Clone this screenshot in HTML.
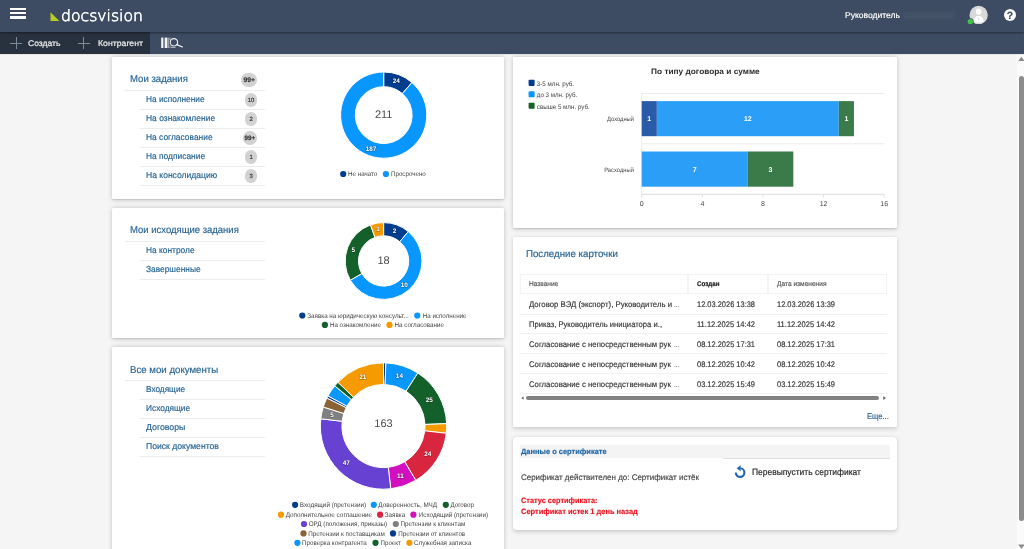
<!DOCTYPE html>
<html lang="ru"><head><meta charset="utf-8"><title>Docsvision</title>
<style>
html,body{margin:0;padding:0}
#root{position:absolute;left:0;top:0;width:1024px;height:549px;overflow:hidden;will-change:transform}
body{width:1024px;height:549px;overflow:hidden;background:#f5f5f5;font-family:"Liberation Sans",Arial,sans-serif;position:relative}
.abs{position:absolute}
.t{position:absolute;white-space:nowrap;line-height:20px;height:20px;text-rendering:geometricPrecision;-webkit-text-stroke:0.16px currentColor}
#top{position:absolute;left:0;top:0;width:1024px;height:32px;background:#3d4c62;box-shadow:0 0.7px 2px rgba(0,0,0,.42);z-index:2}
#tb{position:absolute;left:0;top:32px;width:1024px;height:21.7px;background:#3d4c62;box-shadow:0 0.4px 1.2px rgba(0,0,0,.3);z-index:1}
#tbd{position:absolute;left:0;top:0;width:150.3px;height:21.9px;background:#28323f}
.hb{position:absolute;left:10px;width:16.2px;height:2.2px;background:#fff;z-index:3}
#help{position:absolute;left:1003.9px;top:8.8px;width:12px;height:12px;border-radius:50%;background:#fff;z-index:3}
.card{position:absolute;background:#fff;border-radius:1.2px;box-shadow:0 0.5px 5px rgba(0,0,0,.2),0 0.8px 1.2px rgba(0,0,0,.1)}
.cb{box-shadow:0 1.7px 4px rgba(0,0,0,.17),0 0 1.2px rgba(0,0,0,.1)}
.hl{position:absolute;height:1px}
.bd{position:absolute;background:#d2d2d2}
.th{position:absolute;box-sizing:border-box;border:1px solid #f3f3f3;background:#fff}
#sbt{position:absolute;left:1016.8px;top:54px;width:7.2px;height:495px;background:#fafafa}
#sbth{position:absolute;left:1018.9px;top:76.4px;width:5.6px;height:444.2px;border-radius:2.8px;background:#8c8c8c}
#ch{position:absolute;left:0;top:0;font-family:"Liberation Sans",Arial,sans-serif;text-rendering:geometricPrecision}
#ch .sl{fill:#fff;font-weight:700;text-anchor:middle;paint-order:stroke;stroke:rgba(0,0,0,.35);stroke-width:1px;stroke-linejoin:round}
svg.abs,.t,.z{z-index:3}
</style></head>
<body>
<div id="root">
<div id="top"></div>
<div id="tb"><div id="tbd"></div></div>
<div class="hb" style="top:7.9px"></div>
<div class="hb" style="top:12.1px"></div>
<div class="hb" style="top:16.4px"></div>
<svg class="abs" style="left:50px;top:11px" width="11" height="11" viewBox="0 0 11 11"><path d="M0.5,1.2L9.4,9.9L0.5,9.9Z" fill="#b7cc23"/></svg>
<div class="t" style="top:6px;font-size:15.4px;color:#fff;font-weight:200;left:60.90px;transform-origin:0 50%;transform:scaleX(1.0184);font-family:'DejaVu Sans','Liberation Sans',sans-serif;-webkit-text-stroke:0.62px #fff;"><span>docsvision</span></div>
<div class="t" style="top:5px;font-size:8.4px;color:#fff;left:844.50px;transform-origin:0 50%;transform:scaleX(1.0191);"><span>Руководитель</span></div>
<div class="abs z" style="left:903px;top:11.5px;width:52px;height:7.5px;background:rgba(255,255,255,.035);filter:blur(1.2px)"></div>
<svg class="abs" style="left:966px;top:4px" width="24" height="24" viewBox="0 0 24 24">
<defs><clipPath id="avc"><circle cx="12.65" cy="10.95" r="9.15"/></clipPath></defs>
<circle cx="12.65" cy="10.95" r="9.15" fill="#d9d9d9"/>
<g clip-path="url(#avc)" fill="#fff"><ellipse cx="12.6" cy="7.6" rx="2.7" ry="3.2"/><path d="M7.6,18.5C7.6,13.8 9.3,12 12.6,12C15.9,12 17.6,13.8 17.6,18.5Z"/></g>
<path d="M12.6,12.2L12,15.8L12.6,16.6L13.2,15.8Z" fill="#d9d9d9"/>
<circle cx="4.3" cy="17.6" r="3.3" fill="#3d4c62"/><circle cx="4.3" cy="17.6" r="2.7" fill="#41c241"/>
</svg>
<div id="help"></div>
<div class="t" style="top:6px;font-size:10.5px;color:#3d4c62;font-weight:700;left:809.90px;width:400px;text-align:center;transform-origin:50% 50%;"><span>?</span></div>
<div class="abs z" style="left:10.10px;top:42.60px;width:12px;height:1px;background:#7f8a98"></div><div class="abs z" style="left:15.60px;top:37.10px;width:1px;height:12px;background:#7f8a98"></div>
<div class="t" style="top:34px;font-size:8.2px;color:#f4f4f4;left:27.60px;transform-origin:0 50%;transform:scaleX(1.0410);"><span>Создать</span></div>
<div class="abs z" style="left:77.75px;top:42.80px;width:12px;height:1px;background:#7f8a98"></div><div class="abs z" style="left:83.25px;top:37.30px;width:1px;height:12px;background:#7f8a98"></div>
<div class="t" style="top:34px;font-size:8.2px;color:#f4f4f4;left:98.00px;transform-origin:0 50%;transform:scaleX(1.0627);"><span>Контрагент</span></div>
<svg class="abs" style="left:160px;top:36px" width="26" height="14" viewBox="0 0 26 14">
<g fill="#f4f4f4"><rect x="1.2" y="1.6" width="1.9" height="10.4"/><rect x="3.6" y="1.6" width="0.7" height="10.4" opacity=".8"/><rect x="4.9" y="1.6" width="2.2" height="10.4"/><rect x="7.6" y="1.6" width="0.9" height="10.4"/>
<rect x="9.6" y="1.6" width="0.8" height="2.6" opacity=".8"/><rect x="9.6" y="9.4" width="0.8" height="2.6" opacity=".8"/><rect x="11" y="11" width="4.5" height="1" opacity=".6"/></g>
<circle cx="13.9" cy="6.3" r="3.7" fill="none" stroke="#f4f4f4" stroke-width="1.1"/>
<path d="M16.8,8.6L22.4,11" stroke="#f4f4f4" stroke-width="1.2" stroke-linecap="round"/>
</svg>
<div id="sbt"></div><div id="sbth"></div>
<svg class="abs" style="left:1016px;top:54px" width="8" height="10" viewBox="0 0 8 10"><path d="M2.2,7L5.4,2.8L8.6,7Z" fill="#8a8a8a"/></svg>
<svg class="abs" style="left:1016px;top:540.6px" width="8" height="9" viewBox="0 0 8 9"><path d="M2.2,3.6L8.6,3.6L5.4,7.8Z" fill="#8a8a8a"/></svg>
<div class="card" style="left:112px;top:57px;width:392px;height:141.5px;"></div>
<div class="t" style="top:70px;font-size:10.0px;color:#256394;left:129.60px;transform-origin:0 50%;transform:scaleX(0.9580);"><span>Мои задания</span></div>
<div class="bd" style="left:241.40px;top:72.80px;width:15.7px;height:14.4px;border-radius:7.2px"></div><div class="t" style="top:71px;font-size:6.8px;color:#333;font-weight:700;left:49.25px;width:400px;text-align:center;transform-origin:50% 50%;"><span>99+</span></div>
<div class="hl" style="left:124.5px;top:90.00px;width:140.30px;background:#ececec"></div>
<div class="t" style="top:89px;font-size:8.7px;color:#256394;left:145.70px;transform-origin:0 50%;transform:scaleX(0.9567);"><span>На исполнение</span></div>
<div class="bd" style="left:245.10px;top:93.30px;width:12px;height:13.6px;border-radius:6.8px"></div><div class="t" style="top:91px;font-size:6.0px;color:#333;left:51.10px;width:400px;text-align:center;transform-origin:50% 50%;"><span>10</span></div>
<div class="hl" style="left:140px;top:109.00px;width:124.80px;background:#ececec"></div>
<div class="t" style="top:108px;font-size:8.7px;color:#256394;left:145.70px;transform-origin:0 50%;transform:scaleX(0.9739);"><span>На ознакомление</span></div>
<div class="bd" style="left:245.10px;top:112.30px;width:12px;height:13.6px;border-radius:6.8px"></div><div class="t" style="top:110px;font-size:6.0px;color:#333;left:51.10px;width:400px;text-align:center;transform-origin:50% 50%;"><span>2</span></div>
<div class="hl" style="left:140px;top:128.00px;width:124.80px;background:#ececec"></div>
<div class="t" style="top:127px;font-size:8.7px;color:#256394;left:145.70px;transform-origin:0 50%;transform:scaleX(0.9683);"><span>На согласование</span></div>
<div class="bd" style="left:242.50px;top:131.30px;width:14.6px;height:13.6px;border-radius:6.8px"></div><div class="t" style="top:129px;font-size:6.3px;color:#333;font-weight:700;left:49.80px;width:400px;text-align:center;transform-origin:50% 50%;"><span>99+</span></div>
<div class="hl" style="left:140px;top:147.00px;width:124.80px;background:#ececec"></div>
<div class="t" style="top:146px;font-size:8.7px;color:#256394;left:145.70px;transform-origin:0 50%;transform:scaleX(0.9664);"><span>На подписание</span></div>
<div class="bd" style="left:245.10px;top:150.30px;width:12px;height:13.6px;border-radius:6.8px"></div><div class="t" style="top:148px;font-size:6.0px;color:#333;left:51.10px;width:400px;text-align:center;transform-origin:50% 50%;"><span>1</span></div>
<div class="hl" style="left:140px;top:166.00px;width:124.80px;background:#ececec"></div>
<div class="t" style="top:165px;font-size:8.7px;color:#256394;left:145.70px;transform-origin:0 50%;transform:scaleX(0.9834);"><span>На консолидацию</span></div>
<div class="bd" style="left:245.10px;top:169.30px;width:12px;height:13.6px;border-radius:6.8px"></div><div class="t" style="top:167px;font-size:6.0px;color:#333;left:51.10px;width:400px;text-align:center;transform-origin:50% 50%;"><span>3</span></div>
<div class="hl" style="left:140px;top:185.00px;width:124.80px;background:#ececec"></div>
<div class="card" style="left:112px;top:207.6px;width:392px;height:130.4px;"></div>
<div class="t" style="top:221px;font-size:10.0px;color:#256394;left:129.60px;transform-origin:0 50%;transform:scaleX(0.9489);"><span>Мои исходящие задания</span></div>
<div class="hl" style="left:124.5px;top:241.00px;width:140.30px;background:#ececec"></div>
<div class="t" style="top:240px;font-size:8.7px;color:#256394;left:145.70px;transform-origin:0 50%;transform:scaleX(0.9642);"><span>На контроле</span></div>
<div class="hl" style="left:140px;top:260.00px;width:124.80px;background:#ececec"></div>
<div class="t" style="top:259px;font-size:8.7px;color:#256394;left:145.70px;transform-origin:0 50%;transform:scaleX(0.9624);"><span>Завершенные</span></div>
<div class="hl" style="left:140px;top:279.00px;width:124.80px;background:#ececec"></div>
<div class="card" style="left:112px;top:347.3px;width:392px;height:230px;"></div>
<div class="t" style="top:361px;font-size:10.0px;color:#256394;left:129.50px;transform-origin:0 50%;transform:scaleX(0.9659);"><span>Все мои документы</span></div>
<div class="hl" style="left:124.5px;top:379.80px;width:140.30px;background:#ececec"></div>
<div class="t" style="top:379px;font-size:8.7px;color:#256394;left:145.70px;transform-origin:0 50%;transform:scaleX(0.9490);"><span>Входящие</span></div>
<div class="hl" style="left:140px;top:398.80px;width:124.80px;background:#ececec"></div>
<div class="t" style="top:398px;font-size:8.7px;color:#256394;left:145.70px;transform-origin:0 50%;transform:scaleX(0.9567);"><span>Исходящие</span></div>
<div class="hl" style="left:140px;top:417.80px;width:124.80px;background:#ececec"></div>
<div class="t" style="top:417px;font-size:8.7px;color:#256394;left:145.70px;transform-origin:0 50%;transform:scaleX(1.0090);"><span>Договоры</span></div>
<div class="hl" style="left:140px;top:436.80px;width:124.80px;background:#ececec"></div>
<div class="t" style="top:436px;font-size:8.7px;color:#256394;left:145.70px;transform-origin:0 50%;transform:scaleX(0.9923);"><span>Поиск документов</span></div>
<div class="hl" style="left:140px;top:455.80px;width:124.80px;background:#ececec"></div>
<div class="card" style="left:513px;top:57px;width:384px;height:170.6px;"></div>
<div class="card cb" style="left:513px;top:236.8px;width:384px;height:190.6px;"></div>
<div class="card cb" style="left:513px;top:436.7px;width:384px;height:93.1px;border-radius:4px;"></div>
<div class="t" style="top:245px;font-size:9.9px;color:#256394;left:526.00px;transform-origin:0 50%;transform:scaleX(0.9817);"><span>Последние карточки</span></div>
<div class="th" style="left:520.3px;top:274px;width:167.3px;height:20px"></div>
<div class="th" style="left:688.2px;top:274px;width:79.6px;height:20px"></div>
<div class="th" style="left:768.4px;top:274px;width:118.8px;height:20px"></div>
<div class="t" style="top:275px;font-size:6.8px;color:#555;left:528.70px;transform-origin:0 50%;transform:scaleX(0.9613);"><span>Название</span></div>
<div class="t" style="top:275px;font-size:6.8px;color:#111;font-weight:700;left:697.20px;transform-origin:0 50%;transform:scaleX(0.9160);"><span>Создан</span></div>
<div class="t" style="top:275px;font-size:6.8px;color:#555;left:777.10px;transform-origin:0 50%;transform:scaleX(0.9691);"><span>Дата изменения</span></div>
<div class="t" style="top:295px;font-size:8.1px;color:#333;left:528.60px;transform-origin:0 50%;transform:scaleX(0.9596);"><span>Договор ВЭД (экспорт), Руководитель и</span></div>
<div class="t" style="top:296px;font-size:7.0px;color:#666;left:673.50px;transform-origin:0 50%;transform:scaleX(0.9583);"><span>...</span></div>
<div class="t" style="top:295px;font-size:8.1px;color:#333;left:697.20px;transform-origin:0 50%;transform:scaleX(0.9204);"><span>12.03.2026 13:38</span></div>
<div class="t" style="top:295px;font-size:8.1px;color:#333;left:777.10px;transform-origin:0 50%;transform:scaleX(0.9204);"><span>12.03.2026 13:39</span></div>
<div class="hl" style="left:520.3px;top:313.50px;width:366.90px;background:#f0f0f0"></div>
<div class="t" style="top:315px;font-size:8.1px;color:#333;left:528.60px;transform-origin:0 50%;transform:scaleX(0.9436);"><span>Приказ, Руководитель инициатора и.,</span></div>
<div class="t" style="top:315px;font-size:8.1px;color:#333;left:697.20px;transform-origin:0 50%;transform:scaleX(0.9292);"><span>11.12.2025 14:42</span></div>
<div class="t" style="top:315px;font-size:8.1px;color:#333;left:777.10px;transform-origin:0 50%;transform:scaleX(0.9292);"><span>11.12.2025 14:42</span></div>
<div class="hl" style="left:520.3px;top:333.35px;width:366.90px;background:#f0f0f0"></div>
<div class="t" style="top:335px;font-size:8.1px;color:#333;left:528.60px;transform-origin:0 50%;transform:scaleX(0.9567);"><span>Согласование с непосредственным рук</span></div>
<div class="t" style="top:336px;font-size:7.0px;color:#666;left:673.50px;transform-origin:0 50%;transform:scaleX(0.9583);"><span>...</span></div>
<div class="t" style="top:335px;font-size:8.1px;color:#333;left:697.20px;transform-origin:0 50%;transform:scaleX(0.9204);"><span>08.12.2025 17:31</span></div>
<div class="t" style="top:335px;font-size:8.1px;color:#333;left:777.10px;transform-origin:0 50%;transform:scaleX(0.9204);"><span>08.12.2025 17:31</span></div>
<div class="hl" style="left:520.3px;top:353.20px;width:366.90px;background:#f0f0f0"></div>
<div class="t" style="top:355px;font-size:8.1px;color:#333;left:528.60px;transform-origin:0 50%;transform:scaleX(0.9567);"><span>Согласование с непосредственным рук</span></div>
<div class="t" style="top:356px;font-size:7.0px;color:#666;left:673.50px;transform-origin:0 50%;transform:scaleX(0.9583);"><span>...</span></div>
<div class="t" style="top:355px;font-size:8.1px;color:#333;left:697.20px;transform-origin:0 50%;transform:scaleX(0.9204);"><span>08.12.2025 10:42</span></div>
<div class="t" style="top:355px;font-size:8.1px;color:#333;left:777.10px;transform-origin:0 50%;transform:scaleX(0.9204);"><span>08.12.2025 10:42</span></div>
<div class="hl" style="left:520.3px;top:373.05px;width:366.90px;background:#f0f0f0"></div>
<div class="t" style="top:375px;font-size:8.1px;color:#333;left:528.60px;transform-origin:0 50%;transform:scaleX(0.9567);"><span>Согласование с непосредственным рук</span></div>
<div class="t" style="top:376px;font-size:7.0px;color:#666;left:673.50px;transform-origin:0 50%;transform:scaleX(0.9583);"><span>...</span></div>
<div class="t" style="top:375px;font-size:8.1px;color:#333;left:697.20px;transform-origin:0 50%;transform:scaleX(0.9204);"><span>03.12.2025 15:49</span></div>
<div class="t" style="top:375px;font-size:8.1px;color:#333;left:777.10px;transform-origin:0 50%;transform:scaleX(0.9204);"><span>03.12.2025 15:49</span></div>
<div class="hl" style="left:520.3px;top:392.90px;width:366.90px;background:#f0f0f0"></div>
<div class="abs" style="left:526px;top:396.3px;width:353.3px;height:3.5px;border-radius:2px;background:#828282"></div>
<svg class="abs" style="left:520px;top:394px" width="6" height="8" viewBox="0 0 6 8"><path d="M3.6,2.4L3.6,5.8L1.2,4.1Z" fill="#666"/></svg>
<svg class="abs" style="left:881px;top:394px" width="6" height="8" viewBox="0 0 6 8"><path d="M2.2,2.2L2.2,6L5,4.1Z" fill="#666"/></svg>
<div class="t" style="top:406px;font-size:8.3px;color:#256394;right:135.00px;transform-origin:100% 50%;transform:scaleX(0.9203);"><span>Еще...</span></div>
<div class="abs" style="left:520.3px;top:444.9px;width:369.7px;height:12.9px;background:#f4f4f4"></div>
<div class="hl" style="left:723.4px;top:457.70px;width:166.60px;background:#e0e0e0"></div>
<div class="t" style="top:442px;font-size:7.7px;color:#1f66a3;font-weight:700;left:520.60px;transform-origin:0 50%;transform:scaleX(0.9727);"><span>Данные о сертификате</span></div>
<div class="t" style="top:468px;font-size:8.2px;color:#444;left:520.50px;transform-origin:0 50%;transform:scaleX(0.9733);"><span>Серификат действителен до: Сертификат истёк</span></div>
<div class="t" style="top:491px;font-size:7.8px;color:#ec1622;font-weight:700;left:520.50px;transform-origin:0 50%;transform:scaleX(0.9444);"><span>Статус сертификата:</span></div>
<div class="t" style="top:502px;font-size:7.8px;color:#ec1622;font-weight:700;left:520.50px;transform-origin:0 50%;transform:scaleX(0.9566);"><span>Сертификат истек 1 день назад</span></div>
<svg class="abs" style="left:733px;top:465px" width="14" height="15" viewBox="0 0 14 15">
<path d="M7.1,3.3A4.3,4.3 0 1 1 2.8,7.6" fill="none" stroke="#2567b2" stroke-width="2.1" transform="rotate(0 7.1 7.6)"/>
<path d="M7.6,0.3L7.6,6.3L3.7,3.3Z" fill="#2567b2"/>
</svg>
<div class="t" style="top:462px;font-size:9.0px;color:#222;left:751.60px;transform-origin:0 50%;transform:scaleX(0.9402);"><span>Перевыпустить сертификат</span></div>
<svg id="ch" width="1024" height="549" viewBox="0 0 1024 549"><path d="M383.70,72.00A43.10,43.10 0 0 1 411.95,82.55L402.34,93.61A28.45,28.45 0 0 0 383.70,86.65Z" fill="#003d8f" stroke="#fff" stroke-width="1.0"/>
<path d="M411.95,82.55A43.10,43.10 0 1 1 383.70,72.00L383.70,86.65A28.45,28.45 0 1 0 402.34,93.61Z" fill="#0896ff" stroke="#fff" stroke-width="1.0"/>
<text x="396.35" y="82.95" class="sl" font-size="6.4">24</text>
<text x="371.05" y="150.73" class="sl" font-size="6.4">187</text>
<text x="383.70" y="118.35" text-anchor="middle" font-size="11" fill="#4d4d4d">211</text>
<circle cx="343.20" cy="174.00" r="3.10" fill="#003d8f"/><text x="348.00" y="176.34" font-size="6.7" fill="#444" textLength="29.30" lengthAdjust="spacingAndGlyphs">Не начато</text>
<circle cx="385.90" cy="174.00" r="3.10" fill="#0896ff"/><text x="391.00" y="176.34" font-size="6.7" fill="#444" textLength="34.80" lengthAdjust="spacingAndGlyphs">Просрочено</text>
<path d="M383.60,222.60A38.40,38.40 0 0 1 408.28,231.58L399.77,241.73A25.15,25.15 0 0 0 383.60,235.85Z" fill="#003d8f" stroke="#fff" stroke-width="1.0"/>
<path d="M408.28,231.58A38.40,38.40 0 1 1 350.34,280.20L361.82,273.58A25.15,25.15 0 1 0 399.77,241.73Z" fill="#0896ff" stroke="#fff" stroke-width="1.0"/>
<path d="M350.34,280.20A38.40,38.40 0 0 1 370.47,224.92L375.00,237.36A25.15,25.15 0 0 0 361.82,273.58Z" fill="#14602a" stroke="#fff" stroke-width="1.0"/>
<path d="M370.47,224.92A38.40,38.40 0 0 1 383.60,222.60L383.60,235.85A25.15,25.15 0 0 0 375.00,237.36Z" fill="#f59b00" stroke="#fff" stroke-width="1.0"/>
<text x="394.60" y="232.50" class="sl" font-size="6.4">2</text>
<text x="404.28" y="287.39" class="sl" font-size="6.4">10</text>
<text x="353.36" y="251.74" class="sl" font-size="6.4">5</text>
<text x="378.01" y="231.05" class="sl" font-size="6.4">1</text>
<text x="383.60" y="264.25" text-anchor="middle" font-size="11" fill="#4d4d4d">18</text>
<circle cx="302.30" cy="315.50" r="3.10" fill="#003d8f"/><text x="307.30" y="317.85" font-size="6.7" fill="#444" textLength="101.40" lengthAdjust="spacingAndGlyphs">Заявка на юридическую консульт...</text>
<circle cx="417.30" cy="315.50" r="3.10" fill="#0896ff"/><text x="422.70" y="317.85" font-size="6.7" fill="#444" textLength="43.90" lengthAdjust="spacingAndGlyphs">На исполнение</text>
<circle cx="324.90" cy="324.90" r="3.10" fill="#14602a"/><text x="329.90" y="327.25" font-size="6.7" fill="#444" textLength="51.00" lengthAdjust="spacingAndGlyphs">На ознакомление</text>
<circle cx="389.50" cy="324.90" r="3.10" fill="#f59b00"/><text x="394.50" y="327.25" font-size="6.7" fill="#444" textLength="49.50" lengthAdjust="spacingAndGlyphs">На согласование</text>
<path d="M383.50,362.90A63.15,63.15 0 0 1 385.92,362.95L385.09,384.53A41.55,41.55 0 0 0 383.50,384.50Z" fill="#003d8f" stroke="#fff" stroke-width="1.0"/>
<path d="M385.92,362.95A63.15,63.15 0 0 1 417.83,373.04L406.09,391.17A41.55,41.55 0 0 0 385.09,384.53Z" fill="#0896ff" stroke="#fff" stroke-width="1.0"/>
<path d="M417.83,373.04A63.15,63.15 0 0 1 446.60,423.63L425.02,424.46A41.55,41.55 0 0 0 406.09,391.17Z" fill="#14602a" stroke="#fff" stroke-width="1.0"/>
<path d="M446.60,423.63A63.15,63.15 0 0 1 446.23,433.29L424.78,430.82A41.55,41.55 0 0 0 425.02,424.46Z" fill="#f59b00" stroke="#fff" stroke-width="1.0"/>
<path d="M446.23,433.29A63.15,63.15 0 0 1 415.77,480.33L404.73,461.77A41.55,41.55 0 0 0 424.78,430.82Z" fill="#d7263d" stroke="#fff" stroke-width="1.0"/>
<path d="M415.77,480.33A63.15,63.15 0 0 1 390.74,488.78L388.27,467.33A41.55,41.55 0 0 0 404.73,461.77Z" fill="#d210c0" stroke="#fff" stroke-width="1.0"/>
<path d="M390.74,488.78A63.15,63.15 0 0 1 320.77,418.81L342.22,421.28A41.55,41.55 0 0 0 388.27,467.33Z" fill="#6741d2" stroke="#fff" stroke-width="1.0"/>
<path d="M320.77,418.81A63.15,63.15 0 0 1 323.29,407.00L343.88,413.51A41.55,41.55 0 0 0 342.22,421.28Z" fill="#808080" stroke="#fff" stroke-width="1.0"/>
<path d="M323.29,407.00A63.15,63.15 0 0 1 326.91,398.03L346.26,407.61A41.55,41.55 0 0 0 343.88,413.51Z" fill="#8b6233" stroke="#fff" stroke-width="1.0"/>
<path d="M326.91,398.03A63.15,63.15 0 0 1 328.02,395.88L347.00,406.20A41.55,41.55 0 0 0 346.26,407.61Z" fill="#003d8f" stroke="#fff" stroke-width="1.0"/>
<path d="M328.02,395.88A63.15,63.15 0 0 1 334.78,385.87L351.44,399.61A41.55,41.55 0 0 0 347.00,406.20Z" fill="#0896ff" stroke="#fff" stroke-width="1.0"/>
<path d="M334.78,385.87A63.15,63.15 0 0 1 338.00,382.26L353.56,397.24A41.55,41.55 0 0 0 351.44,399.61Z" fill="#14602a" stroke="#fff" stroke-width="1.0"/>
<path d="M338.00,382.26A63.15,63.15 0 0 1 383.50,362.90L383.50,384.50A41.55,41.55 0 0 0 353.56,397.24Z" fill="#f59b00" stroke="#fff" stroke-width="1.0"/>
<text x="399.42" y="377.50" class="sl" font-size="6.4">14</text>
<text x="429.35" y="401.71" class="sl" font-size="6.4">25</text>
<text x="427.78" y="456.46" class="sl" font-size="6.4">24</text>
<text x="400.38" y="477.77" class="sl" font-size="6.4">11</text>
<text x="346.20" y="465.09" class="sl" font-size="6.4">47</text>
<text x="331.92" y="416.76" class="sl" font-size="6.4">5</text>
<text x="362.85" y="379.25" class="sl" font-size="6.4">21</text>
<text x="383.50" y="427.00" text-anchor="middle" font-size="11" fill="#4d4d4d">163</text>
<circle cx="295.10" cy="504.80" r="3.10" fill="#003d8f"/><text x="299.80" y="507.15" font-size="6.7" fill="#444" textLength="66.30" lengthAdjust="spacingAndGlyphs">Входящий (претензии)</text>
<circle cx="373.80" cy="504.80" r="3.10" fill="#0896ff"/><text x="378.30" y="507.15" font-size="6.7" fill="#444" textLength="58.80" lengthAdjust="spacingAndGlyphs">Доверенность, МЧД</text>
<circle cx="445.80" cy="504.80" r="3.10" fill="#14602a"/><text x="450.50" y="507.15" font-size="6.7" fill="#444" textLength="23.40" lengthAdjust="spacingAndGlyphs">Договор</text>
<circle cx="281.00" cy="514.70" r="3.10" fill="#f59b00"/><text x="285.70" y="517.05" font-size="6.7" fill="#444" textLength="86.30" lengthAdjust="spacingAndGlyphs">Дополнительное соглашение</text>
<circle cx="380.10" cy="514.70" r="3.10" fill="#d7263d"/><text x="384.80" y="517.05" font-size="6.7" fill="#444" textLength="20.40" lengthAdjust="spacingAndGlyphs">Заявка</text>
<circle cx="413.40" cy="514.70" r="3.10" fill="#d210c0"/><text x="418.80" y="517.05" font-size="6.7" fill="#444" textLength="69.20" lengthAdjust="spacingAndGlyphs">Исходящий (претензии)</text>
<circle cx="304.00" cy="524.00" r="3.10" fill="#6741d2"/><text x="308.70" y="526.35" font-size="6.7" fill="#444" textLength="78.50" lengthAdjust="spacingAndGlyphs">ОРД (положения, приказы)</text>
<circle cx="395.80" cy="524.00" r="3.10" fill="#808080"/><text x="400.50" y="526.35" font-size="6.7" fill="#444" textLength="64.70" lengthAdjust="spacingAndGlyphs">Претензии к клиентам</text>
<circle cx="303.50" cy="533.40" r="3.10" fill="#8b6233"/><text x="308.20" y="535.75" font-size="6.7" fill="#444" textLength="76.60" lengthAdjust="spacingAndGlyphs">Претензии к поставщикам</text>
<circle cx="393.00" cy="533.40" r="3.10" fill="#003d8f"/><text x="398.20" y="535.75" font-size="6.7" fill="#444" textLength="67.00" lengthAdjust="spacingAndGlyphs">Претензии от клиентов</text>
<circle cx="297.40" cy="542.80" r="3.10" fill="#0896ff"/><text x="302.10" y="545.14" font-size="6.7" fill="#444" textLength="64.70" lengthAdjust="spacingAndGlyphs">Проверка контрагента</text>
<circle cx="375.50" cy="542.80" r="3.10" fill="#14602a"/><text x="380.60" y="545.14" font-size="6.7" fill="#444" textLength="20.20" lengthAdjust="spacingAndGlyphs">Проект</text>
<circle cx="409.40" cy="542.80" r="3.10" fill="#f59b00"/><text x="414.10" y="545.14" font-size="6.7" fill="#444" textLength="57.40" lengthAdjust="spacingAndGlyphs">Служебная записка</text>
<text x="705.4" y="73.7" text-anchor="middle" font-size="7.9" font-weight="700" fill="#2b2b2b" textLength="108.6" lengthAdjust="spacingAndGlyphs">По типу договора и сумме</text>
<rect x="528.6" y="79.80" width="6" height="6.1" rx="0.8" fill="#003d8f"/>
<text x="536.8" y="86" font-size="6.6" fill="#444" textLength="37.3" lengthAdjust="spacingAndGlyphs">3-5 млн. руб.</text>
<rect x="528.6" y="91.25" width="6" height="6.1" rx="0.8" fill="#0896ff"/>
<text x="536.8" y="97" font-size="6.6" fill="#444" textLength="40.5" lengthAdjust="spacingAndGlyphs">до 3 млн. руб.</text>
<rect x="528.6" y="102.70" width="6" height="6.1" rx="0.8" fill="#176229"/>
<text x="536.8" y="109" font-size="6.6" fill="#444" textLength="53" lengthAdjust="spacingAndGlyphs">свыше 5 млн. руб.</text>
<rect x="641.7" y="93.0" width="242.56" height="1" fill="#ebebeb"/>
<rect x="641.7" y="143.3" width="242.56" height="1" fill="#ebebeb"/>
<rect x="641.7" y="193.8" width="242.56" height="1" fill="#dcdcdc"/>
<rect x="641.2" y="93" width="1" height="101" fill="#ececec"/>
<rect x="641.20" y="194.5" width="1" height="3.2" fill="#e2e2e2"/>
<rect x="701.84" y="194.5" width="1" height="3.2" fill="#e2e2e2"/>
<rect x="762.48" y="194.5" width="1" height="3.2" fill="#e2e2e2"/>
<rect x="823.12" y="194.5" width="1" height="3.2" fill="#e2e2e2"/>
<rect x="883.76" y="194.5" width="1" height="3.2" fill="#e2e2e2"/>
<rect x="641.70" y="101.1" width="15.16" height="35.10" fill="#2a5ba8"/><text x="649.28" y="121.25" text-anchor="middle" font-size="7" font-weight="700" fill="#fff">1</text><rect x="656.86" y="101.1" width="181.92" height="35.10" fill="#2b9ef8"/><text x="747.82" y="121.25" text-anchor="middle" font-size="7" font-weight="700" fill="#fff">12</text><rect x="838.78" y="101.1" width="15.16" height="35.10" fill="#3b7a49"/><text x="846.36" y="121.25" text-anchor="middle" font-size="7" font-weight="700" fill="#fff">1</text>
<rect x="641.70" y="151.5" width="106.12" height="35.20" fill="#2b9ef8"/><text x="694.76" y="171.70" text-anchor="middle" font-size="7" font-weight="700" fill="#fff">7</text><rect x="747.82" y="151.5" width="45.48" height="35.20" fill="#3b7a49"/><text x="770.56" y="171.70" text-anchor="middle" font-size="7" font-weight="700" fill="#fff">3</text>
<text x="607" y="121.4" font-size="6.3" fill="#4a4a4a" textLength="27" lengthAdjust="spacingAndGlyphs">Доходный</text>
<text x="604.2" y="171.6" font-size="6.3" fill="#4a4a4a" textLength="29.8" lengthAdjust="spacingAndGlyphs">Расходный</text>
<text x="641.70" y="206.3" text-anchor="middle" font-size="7" fill="#444">0</text>
<text x="702.34" y="206.3" text-anchor="middle" font-size="7" fill="#444">4</text>
<text x="762.98" y="206.3" text-anchor="middle" font-size="7" fill="#444">8</text>
<text x="823.62" y="206.3" text-anchor="middle" font-size="7" fill="#444">12</text>
<text x="884.26" y="206.3" text-anchor="middle" font-size="7" fill="#444">16</text></svg>
</div>
</body></html>
